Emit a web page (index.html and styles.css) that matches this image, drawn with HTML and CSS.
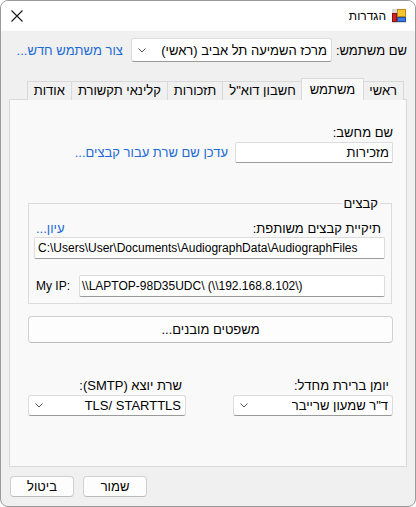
FILE: index.html
```html
<!DOCTYPE html>
<html lang="he" dir="rtl">
<head>
<meta charset="utf-8">
<title>הגדרות</title>
<link rel="stylesheet" href="styles.css">
</head>
<body>
<div class="window">
  <div class="titlebar">
    <svg class="app-icon" width="14" height="14" viewBox="0 0 14 14">
      <rect x="0" y="0" width="14" height="14" fill="#d8d8d8"/>
      <rect x="0.5" y="4.5" width="4" height="8" fill="#d42020" stroke="#8a1010"/>
      <rect x="5.5" y="0.5" width="8" height="7" fill="#f7c531" stroke="#c08a10"/>
      <rect x="5.5" y="8.5" width="8" height="4" fill="#3b7be0" stroke="#1d4fa8"/>
    </svg>
    <span class="title">הגדרות</span>
    <div class="close">
      <svg width="12" height="12" viewBox="0 0 12 12"><path d="M0.5 0.5 L11.5 11.5 M11.5 0.5 L0.5 11.5" stroke="#1a1a1a" stroke-width="1.1" fill="none"/></svg>
    </div>
  </div>

  <div class="content">
    <div class="user-row">
      <span class="label">שם משתמש:</span>
      <div class="combo user-combo">
        <span>מרכז השמיעה תל אביב (ראשי)</span>
        <svg class="chev" width="8" height="5" viewBox="0 0 8 5"><path d="M0.5 0.5 L4 4 L7.5 0.5" stroke="#555" fill="none"/></svg>
      </div>
      <a class="link">צור משתמש חדש...</a>
    </div>

    <div class="tabs">
      <div class="tab">ראשי</div>
      <div class="tab active">משתמש</div>
      <div class="tab">חשבון דוא"ל</div>
      <div class="tab">תזכורות</div>
      <div class="tab">קלינאי תקשורת</div>
      <div class="tab">אודות</div>
    </div>

    <div class="panel">
      <div class="label field-label">שם מחשב:</div>
      <div class="computer-row">
        <div class="textbox computer">מזכירות</div>
        <a class="link">עדכן שם שרת עבור קבצים...</a>
      </div>

      <fieldset class="group">
        <legend>קבצים</legend>
        <div class="folder-row">
          <span class="label">תיקיית קבצים משותפת:</span>
          <a class="link">עיון...</a>
        </div>
        <div class="textbox path" dir="ltr">C:\Users\User\Documents\AudiographData\AudiographFiles</div>
        <div class="ip-row" dir="ltr">
          <span class="label">My IP:</span>
          <div class="textbox ip">\\LAPTOP-98D35UDC\ (\\192.168.8.102\)</div>
        </div>
      </fieldset>

      <div class="btn wide">משפטים מובנים...</div>

      <div class="two-col">
        <div class="col">
          <span class="label">יומן ברירת מחדל:</span>
          <div class="combo">
            <span>ד"ר שמעון שרייבר</span>
            <svg class="chev" width="8" height="5" viewBox="0 0 8 5"><path d="M0.5 0.5 L4 4 L7.5 0.5" stroke="#555" fill="none"/></svg>
          </div>
        </div>
        <div class="col">
          <span class="label">שרת יוצא (SMTP):</span>
          <div class="combo">
            <span>TLS/ STARTTLS</span>
            <svg class="chev" width="8" height="5" viewBox="0 0 8 5"><path d="M0.5 0.5 L4 4 L7.5 0.5" stroke="#555" fill="none"/></svg>
          </div>
        </div>
      </div>
    </div>

    <div class="footer" dir="ltr">
      <div class="btn small">ביטול</div>
      <div class="btn small">שמור</div>
    </div>
  </div>
</div>
</body>
</html>
```

FILE: styles.css
```css
* { box-sizing: border-box; }
html, body { margin: 0; padding: 0; }
body {
  width: 416px;
  height: 507px;
  background: #ffffff;
  font-family: "Segoe UI", "Liberation Sans", Arial, sans-serif;
  font-size: 12px;
  line-height: 15px;
  color: #000;
}
.window {
  width: 416px;
  height: 507px;
  border: 1px solid #9a9a9a;
  border-radius: 8px;
  overflow: hidden;
  display: flex;
  flex-direction: column;
  background: #f0f0f0;
}
.titlebar {
  height: 30px;
  flex-shrink: 0;
  background: #ffffff;
  display: flex;
  align-items: center;
  padding: 0 9px 0 9px;
}
.app-icon { display: block; margin-left: 6px; }
.title { font-size: 12px; }
.close { margin-right: auto; display: flex; align-items: center; padding-left: 1px; }
.close svg { display: block; }

.content {
  flex: 1;
  display: flex;
  flex-direction: column;
  padding: 7px 8px 0 8px;
}
.label { white-space: nowrap; }
.link { color: #1c6ad6; white-space: nowrap; cursor: pointer; }

.user-row {
  display: flex;
  align-items: center;
  height: 24px;
}
.user-row .label { font-size: 13px; margin-left: 4px; }
.user-row .link { font-size: 13px; margin-right: 8px; }

.combo {
  display: flex;
  align-items: center;
  justify-content: space-between;
  background: #ffffff;
  border: 1px solid #dcdcdc;
  border-bottom-color: #9a9a9a;
  border-radius: 3px;
  padding: 0 4px 0 6px;
  white-space: nowrap;
}
.combo .chev { display: block; flex-shrink: 0; }
.user-combo { width: 201px; height: 24px; font-size: 13px; }

.tabs {
  display: flex;
  align-items: flex-end;
  height: 22px;
  margin-top: 16px;
  padding-right: 3px;
  margin-bottom: -1px;
  position: relative;
  z-index: 1;
}
.tab {
  height: 19px;
  padding: 1px 6px 0 6px;
  border: 1px solid #d9d9d9;
  border-bottom: none;
  background: #f0f0f0;
  font-size: 13px;
  white-space: nowrap;
}
.tab + .tab { border-right: none; }
.tab.active {
  height: 22px;
  padding-top: 3px;
  background: #f9f9f9;
  border: 1px solid #d9d9d9;
  border-bottom: none;
  margin: 0 -2px;
  padding-left: 8px;
  padding-right: 8px;
  position: relative;
}
.tab.active + .tab { border-right: 1px solid #d9d9d9; }

.panel {
  height: 368px;
  background: #f9f9f9;
  border: 1px solid #d9d9d9;
  padding: 25px 13px 0 18px;
  display: flex;
  flex-direction: column;
}
.field-label { font-size: 13px; padding-right: 0; }

.textbox {
  background: #ffffff;
  border: 1px solid #dcdcdc;
  border-bottom-color: #9a9a9a;
  border-radius: 2px;
  white-space: nowrap;
  display: flex;
  align-items: center;
  padding: 0 3px;
  overflow: hidden;
}
.computer-row {
  display: flex;
  align-items: center;
  margin-top: 2px;
}
.computer { width: 158px; height: 21px; font-size: 13px; }
.computer-row .link { font-size: 13px; margin-right: 7px; }

.group {
  margin: 33px 1px 0 0;
  padding: 10px 6px 6px 5px;
  border: 1px solid #dcdcdc;
  min-width: 0;
}
.group legend {
  font-size: 13px;
  padding: 0 2px;
  margin-right: 5px;
  line-height: 15px;
}
.folder-row {
  display: flex;
  justify-content: space-between;
  align-items: center;
  padding: 0 4px 0 2px;
  font-size: 13px;
}
.path { height: 22px; margin-top: 1px; font-size: 12px; padding-left: 3px; }
.ip-row {
  display: flex;
  align-items: center;
  margin-top: 16px;
  padding-left: 2px;
}
.ip-row .label { width: 43px; font-size: 12px; }
.ip { flex: 1; height: 22px; font-size: 12px; padding-left: 2px; }

.btn {
  background: #fdfdfd;
  border: 1px solid #d0d0d0;
  border-bottom-color: #bcbcbc;
  border-radius: 4px;
  display: flex;
  align-items: center;
  justify-content: center;
  font-size: 13px;
}
.wide { height: 27px; margin-top: 12px; }

.two-col {
  display: flex;
  justify-content: space-between;
  margin-top: 35px;
}
.col {
  width: 160px;
  display: flex;
  flex-direction: column;
}
.col:last-child { width: 158px; }
.col .label { font-size: 13px; padding-right: 4px; }
.col .combo { height: 21px; margin-top: 2px; font-size: 13px; }

.footer {
  display: flex;
  gap: 9px;
  margin-top: 9px;
  padding-left: 1px;
}
.small { width: 64px; height: 21px; }
```
